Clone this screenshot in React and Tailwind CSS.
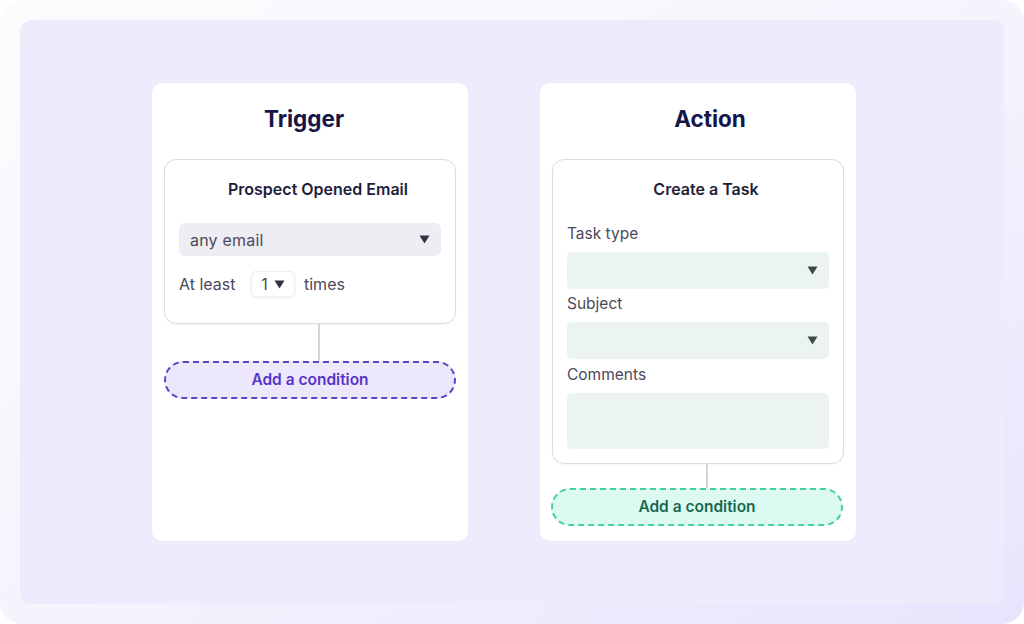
import React from "react";

const font = { fontFamily: "Inter, 'Open Sans', sans-serif" };

function Caret({ className }) {
  return (
    <svg width="11" height="9" viewBox="0 0 11 9" className={className}>
      <path d="M0.5 0.5 H10.5 L5.5 8.5 Z" fill="currentColor" />
    </svg>
  );
}

function Card({ title, titleClass, children }) {
  return (
    <div className="w-[316px] h-[458px] bg-white rounded-[10px] px-3 pt-[22px] flex flex-col items-stretch">
      <div className={"h-[28px] leading-[28px] text-center text-[22.5px] font-bold text-[#14164a] " + titleClass}>
        {title}
      </div>
      <div className="mt-[26px] flex flex-col">{children}</div>
    </div>
  );
}

export default function App() {
  return (
    <div className="w-[1024px] h-[624px] bg-white" style={font}>
      <div className="w-full h-full rounded-[22px] bg-gradient-to-br from-[#fcfcfd] via-[#f5f4fd] to-[#e9e3fd] p-5">
        <div className="w-full h-full rounded-[12px] bg-[#ececfd] flex justify-start gap-[72px] pt-[63px] pl-[132px]">
          <Card title="Trigger" titleClass="pr-[12px]">
            <div className="w-[292px] border-[1.5px] border-[#dcdce0] rounded-[12px] pt-[19px] pb-[26px] px-[14px] shadow-[0_1px_2px_rgba(0,0,0,0.04)]">
              <div className="h-[20px] leading-[20px] text-center text-[16px] font-semibold text-[#1e1e3a] pl-[16px]">
                Prospect Opened Email
              </div>
              <div className="mt-[24px] h-[33px] rounded-[6px] bg-[#eeedf3] flex items-center justify-between pl-[11px] pr-[11px]">
                <span className="text-[16px] text-[#4a4a5a] tracking-[0.2px]">any email</span>
                <Caret className="text-[#333340]" />
              </div>
              <div className="mt-[15px] flex items-center h-[26px]">
                <span className="text-[16px] text-[#4a4a5a] w-[72px]">At least</span>
                <div className="h-[26px] w-[44px] rounded-[5px] bg-white border border-[#efeff2] shadow-[0_1px_3px_rgba(0,0,0,0.06)] flex items-center justify-center gap-[6px]">
                  <span className="text-[16px] text-[#4a4a5a]">1</span>
                  <Caret className="text-[#333340]" />
                </div>
                <span className="ml-[9px] text-[16px] text-[#4a4a5a]">times</span>
              </div>
            </div>
            <div className="h-[37px] w-[1.5px] bg-[#d4d4d8] ml-[154px]" />
            <div className="w-[292px] h-[38px] rounded-full border-2 border-dashed border-[#5a45c9] bg-[#ede7fb] flex items-center justify-center text-[15.5px] font-semibold text-[#5634c8]">
              Add a condition
            </div>
          </Card>
          <Card title="Action" titleClass="pl-[24px]">
            <div className="w-[292px] border-[1.5px] border-[#dcdce0] rounded-[12px] pt-[19px] pb-[14px] px-[14px] shadow-[0_1px_2px_rgba(0,0,0,0.04)]">
              <div className="h-[20px] leading-[20px] text-center text-[16px] font-semibold text-[#1e1e3a] pl-[16px]">
                Create a Task
              </div>
              <div className="mt-[25px] h-[20px] leading-[20px] text-[15.5px] text-[#4a4a5a]">Task type</div>
              <div className="mt-[8px] h-[37px] rounded-[5px] bg-[#ebf4f1] flex items-center justify-end pr-[11px]">
                <Caret className="text-[#3a4a44]" />
              </div>
              <div className="mt-[5px] h-[20px] leading-[20px] text-[15.5px] text-[#4a4a5a]">Subject</div>
              <div className="mt-[8px] h-[37px] rounded-[5px] bg-[#ebf4f1] flex items-center justify-end pr-[11px]">
                <Caret className="text-[#3a4a44]" />
              </div>
              <div className="mt-[6px] h-[20px] leading-[20px] text-[15.5px] text-[#4a4a5a]">Comments</div>
              <div className="mt-[8px] h-[56px] rounded-[5px] bg-[#ebf4f1]" />
            </div>
            <div className="h-[24px] w-[1.5px] bg-[#d4d4d8] ml-[154px]" />
            <div className="w-[292px] -ml-[1px] h-[38px] rounded-full border-2 border-dashed border-[#45cfa3] bg-[#dcfaf2] flex items-center justify-center text-[15.5px] font-semibold text-[#17694f]">
              Add a condition
            </div>
          </Card>
        </div>
      </div>
    </div>
  );
}
